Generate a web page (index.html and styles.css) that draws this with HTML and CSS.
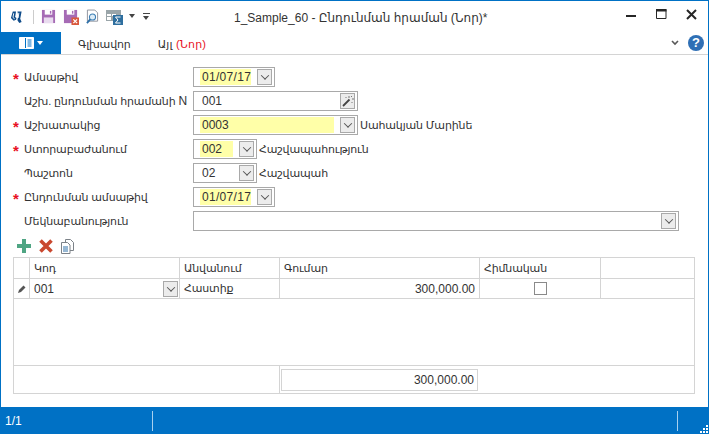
FILE: index.html
```html
<!DOCTYPE html>
<html lang="hy">
<head>
<meta charset="utf-8">
<title>1_Sample_60</title>
<link rel="stylesheet" href="styles.css">
</head>
<body>
<div class="window">
  <header class="titlebar">
    <svg class="logo" width="13" height="16" viewBox="0 0 14 16"><path d="M3 2h3.500l-1 6 1.500 1-.5 2-2.500 1L1 9zM8 2h4.500l-1.500 8 1.500 3.500-2.500 1-2-3 1-5z" fill="#0f4c8a"/><path d="M4 4l-.8 4.500L5 10M9.500 3.500L8.800 9" stroke="#fff" stroke-width="1" fill="none"/></svg>
    <span class="tool-sep"></span>
    <svg class="qa" width="15" height="15" viewBox="0 0 16 16"><path d="M1 1h14v14H1z" fill="#a66bb5"/><path d="M4 1h8v5H4z" fill="#fff"/><path d="M9.500 2h1.500v3H9.500z" fill="#a66bb5"/><path d="M3 9h10v6H3z" fill="#e9dcef"/></svg>
    <svg class="qa" width="16" height="16" viewBox="0 0 17 17"><path d="M1 1h14v14H1z" fill="#a66bb5"/><path d="M4 1h8v5H4z" fill="#fff"/><path d="M9.500 2h1.500v3H9.500z" fill="#a66bb5"/><path d="M9 9h8v8H9z" fill="#d9593d"/><path d="M11 11l4 4M15 11l-4 4" stroke="#fff" stroke-width="1.300"/></svg>
    <svg class="qa" width="13" height="16" viewBox="0 0 14 16"><path d="M1.500 .5h8l3 3v9h-11z" fill="#fff" stroke="#8a9099"/><circle cx="7" cy="8" r="3.300" fill="#dcecf7" stroke="#3d7fb5" stroke-width="1.200"/><path d="M4.500 10.500L1 14.500" stroke="#2f70a8" stroke-width="2"/></svg>
    <svg class="qa" width="17" height="16" viewBox="0 0 17 16"><path d="M0 1h15v11H0z" fill="#9aa5a9"/><path d="M1 5h4v2H1zM1 8h4v3H1zM6 5h4v2H6z" fill="#fff"/><path d="M7 6h10v10H7z" fill="#2f6f9f"/><path d="M14.500 8h-5l2.500 3-2.500 3h5" stroke="#fff" fill="none"/></svg>
    <span class="tri small"></span>
    <span class="custom"><span class="bar"></span><span class="tri"></span></span>
    <div class="title">1_Sample_60 - Ընդունման հրաման (Նոր)*</div>
    <div class="winbtns">
      <svg width="11" height="11" viewBox="0 0 11 11"><path d="M0 6h10v2H0z" fill="#262626"/></svg>
      <svg width="11" height="11" viewBox="0 0 11 11"><path d="M.500.500h9.500v9H.500z" fill="none" stroke="#262626"/><path d="M0 0h10.500v2.500H0z" fill="#262626"/></svg>
      <svg width="11" height="11" viewBox="0 0 11 11"><path d="M1 1l9 9M10 1l-9 9" stroke="#262626" stroke-width="2"/></svg>
    </div>
  </header>

  <nav class="ribbon">
    <div class="filetab">
      <svg width="15" height="12" viewBox="0 0 15 12"><path d="M.500.500h14v11H.500z" fill="#fff" stroke="#fff"/><path d="M6.500 1v10" stroke="#0071c5"/><path d="M8.500 3h4M8.500 5h4M8.500 7h4M8.500 9h4" stroke="#0071c5"/></svg>
      <span class="tri white"></span>
    </div>
    <span class="tab first">Գլխավոր</span>
    <span class="tab second">Այլ <span class="red">(Նոր)</span></span>
    <span class="ribbon-right">
      <svg width="8" height="6" viewBox="0 0 8 6"><path d="M1 1l3 3 3-3" fill="none" stroke="#595959" stroke-width="1.600"/></svg>
      <span class="help">?</span>
    </span>
  </nav>

  <main class="content">
    <form class="form">
      <div class="row"><label class="req">Ամսաթիվ</label>
        <span class="field date"><span class="val hl short dt">01/07/17</span><span class="drop"></span></span></div>
      <div class="row"><label>Աշխ. ընդունման հրամանի <span class="lat">N</span></label>
        <span class="field wide"><span class="val grow">001</span><span class="drop wand">
          <svg width="12" height="12" viewBox="0 0 12 12"><path d="M1 11l6.500-6.500" stroke="#444" stroke-width="1.800"/><path d="M7 1v2M10 4h2M9 2l1-1M4 2v1M10 7v1" stroke="#777"/></svg></span></span></div>
      <div class="row"><label class="req">Աշխատակից</label>
        <span class="field wide"><span class="val hl grow">0003</span><span class="drop"></span></span>
        <span class="after">Սահակյան Մարինե</span></div>
      <div class="row"><label class="req">Ստորաբաժանում</label>
        <span class="field code"><span class="val hl mid">002</span><span class="drop"></span></span>
        <span class="after">Հաշվապահություն</span></div>
      <div class="row"><label>Պաշտոն</label>
        <span class="field code"><span class="val mid">02</span><span class="drop"></span></span>
        <span class="after">Հաշվապահ</span></div>
      <div class="row"><label class="req">Ընդունման ամսաթիվ</label>
        <span class="field date"><span class="val hl short dt">01/07/17</span><span class="drop"></span></span></div>
      <div class="row"><label>Մեկնաբանություն</label>
        <span class="field full"><span class="val grow"></span><span class="drop"></span></span></div>
    </form>

    <div class="grid-tools">
      <svg width="14" height="14" viewBox="0 0 14 14"><path d="M5 0h4v5h5v4H9v5H5V9H0V5h5z" fill="#4fa583"/></svg>
      <svg width="14" height="14" viewBox="0 0 14 14"><path d="M1.500 1.500l11 11M12.500 1.500l-11 11" stroke="#c9482f" stroke-width="3.600"/></svg>
      <svg width="14" height="15" viewBox="0 0 14 15"><path d="M4.500.500h5l3 3v8h-8z" fill="#fff" stroke="#7c8288"/><path d="M.500 3.500h6l2.500 2.500v8.500H.500z" fill="#fff" stroke="#7c8288"/><path d="M2 8h5M2 10h5M2 12h5" stroke="#2f70a8"/></svg>
    </div>

    <table class="grid">
      <colgroup><col class="c0"><col class="c1"><col class="c2"><col class="c3"><col class="c4"><col></colgroup>
      <tr class="head"><th></th><th>Կոդ</th><th>Անվանում</th><th>Գումար</th><th>Հիմնական</th><th></th></tr>
      <tr class="data">
        <td class="pen"><svg width="10" height="10" viewBox="0 0 10 10"><path d="M1 9l1-3 4.500-4.500 2 2L4 8z" fill="#555"/></svg></td>
        <td class="cellcode"><span class="cellflex">001<span class="drop"></span></span></td>
        <td>Հաստիք</td>
        <td class="num">300,000.00</td>
        <td class="center"><span class="check"></span></td>
        <td></td>
      </tr>
      <tr class="spacer"><td colspan="6"></td></tr>
      <tr class="foot"><td colspan="3"></td><td colspan="3" class="footcell"><span class="total">300,000.00</span></td></tr>
    </table>
  </main>

  <footer class="status">
    <span class="count">1/1</span>
    <span class="vsep first"></span>
    <span class="vsep last"></span>
    <svg class="grip" width="8" height="8" viewBox="0 0 8 8"><path d="M6 0h2v2H6zM3 3h2v2H3zM6 3h2v2H6zM0 6h2v2H0zM3 6h2v2H3zM6 6h2v2H6z" fill="#fff"/></svg>
  </footer>
</div>
</body>
</html>
```

FILE: styles.css
```css
* { box-sizing: border-box; }
html, body { margin: 0; padding: 0; }
body { width: 709px; height: 434px; overflow: hidden; font: 11px "Liberation Sans", "DejaVu Sans", sans-serif; letter-spacing: -.15px; color: #333; background: #fff; }
.window { width: 709px; height: 434px; display: flex; flex-direction: column; border: solid #0071c5; border-width: 1px 1px 0; }
.titlebar { height: 31px; flex: none; display: flex; align-items: center; padding: 0 0 0 9px; position: relative; }
.logo { margin-right: 10px; }
.tool-sep { width: 1px; height: 14px; background: #ccc; margin-right: 7px; }
.qa { flex: none; margin-right: 7px; }
.tri { display: block; width: 0; height: 0; border: 3.500px solid transparent; border-top: 4px solid #444; border-bottom: 0; }
.tri.small { margin: 0 8px 2px -1px; }
.custom { display: flex; flex-direction: column; gap: 2px; }
.bar { width: 7px; height: 1px; background: #444; }
.title { position: absolute; left: 233px; top: 10px; font-size: 12px; letter-spacing: 0; white-space: nowrap; color: #333; }
.winbtns { margin-left: auto; display: flex; gap: 19px; padding: 0 11px 4px 0; align-items: center; }
.ribbon { height: 23px; flex: none; display: flex; align-items: stretch; border-bottom: 1px solid #d4d4d4; }
.filetab { width: 60px; background: #0071c5; display: flex; align-items: center; justify-content: center; gap: 3px; height: 22px; }
.tri.white { border-top-color: #fff; }
.tab { line-height: 24px; margin-left: 17px; color: #333; }
.tab.first { margin-right: 10px; }
.tab.second { letter-spacing: .2px; }
.red { color: #e81123; }
.ribbon-right { margin-left: auto; display: flex; align-items: center; gap: 9px; padding-right: 4px; }
.help { width: 16px; height: 16px; border-radius: 50%; background: #2f6fb5; color: #fff; font: bold 13px/16px "Liberation Sans", sans-serif; letter-spacing: 0; text-align: center; }
.content { flex: 1; padding: 12px; display: flex; flex-direction: column; min-height: 0; }
.form { display: flex; flex-direction: column; gap: 4px; }
.row { display: flex; align-items: center; height: 20px; }
.row label { width: 180px; flex: none; padding-left: 11px; position: relative; white-space: nowrap; }
.lat { font-size: 12px; letter-spacing: 0; }
.req::before { content: "*"; color: #e81123; position: absolute; left: 0; top: -1px; font-size: 15px; font-weight: bold; letter-spacing: 0; }
.field { height: 20px; border: 1px solid #a9a9a9; display: flex; align-items: center; padding: 2px 2px 2px 6px; background: #fff; flex: none; }
.field.date { width: 82px; }
.field.wide { width: 165px; }
.field.code { width: 64px; }
.field.full { width: 486px; }
.val { display: block; height: 16px; font-size: 12px; letter-spacing: 0; line-height: 16px; padding-left: 2px; color: #333; }
.dt { letter-spacing: .3px; }
.hl { background: #ffffa8; }
.grow { flex: 1; }
.short { width: 58px; }
.mid { width: 34px; }
.drop { margin-left: auto; width: 15px; height: 16px; flex: none; background: #ececec; border: 1px solid #a9a9a9; display: flex; align-items: center; justify-content: center; }
.val + .drop { margin-left: 6px; }
.drop:empty::after { content: ""; width: 5px; height: 5px; border: solid #555; border-width: 0 1.500px 1.500px 0; transform: rotate(45deg) translate(-1px, -1px); }
.after { margin-left: 2px; white-space: nowrap; }
.grid-tools { height: 26px; display: flex; align-items: center; gap: 8px; padding: 4px 0 0 4px; flex: none; }
.grid { width: 682px; height: 137px; border-collapse: collapse; table-layout: fixed; flex: none; }
.grid th, .grid td { border: 1px solid #d4d4d4; padding: 0 4px; font-weight: normal; text-align: left; }
.c0 { width: 16px; }
.c1 { width: 150px; }
.c2 { width: 100px; }
.c3 { width: 200px; }
.c4 { width: 121px; }
.head { height: 21px; }
.data { height: 20px; }
.foot { height: 28px; }
.grid td.pen { padding: 0 0 0 3px; }
.pen svg { display: block; }
.grid td.cellcode { padding: 0 0 0 4px; font-size: 12px; letter-spacing: 0; }
.cellflex { display: flex; align-items: center; padding-right: 1px; }
.grid td.num { text-align: right; font-size: 12px; letter-spacing: 0; }
.grid td.center { text-align: center; }
.check { display: inline-block; width: 13px; height: 13px; border: 1px solid #8a8a8a; vertical-align: middle; }
.grid td.footcell { padding: 0; }
.total { display: block; width: 197px; height: 22px; margin: 0 0 0 1px; border: 1px solid #d4d4d4; font-size: 12px; letter-spacing: 0; line-height: 20px; text-align: right; padding-right: 3px; }
.status { height: 27px; flex: none; margin: 0 -1px; background: #0071c5; color: #fff; position: relative; display: flex; align-items: center; padding-left: 5px; font-size: 12px; letter-spacing: 0; }
.count { width: 147px; }
.vsep { width: 1px; height: 20px; background: #a8d0ef; }
.vsep.last { margin-left: auto; margin-right: 31px; }
.grip { position: absolute; right: 1px; bottom: 1px; }
```
